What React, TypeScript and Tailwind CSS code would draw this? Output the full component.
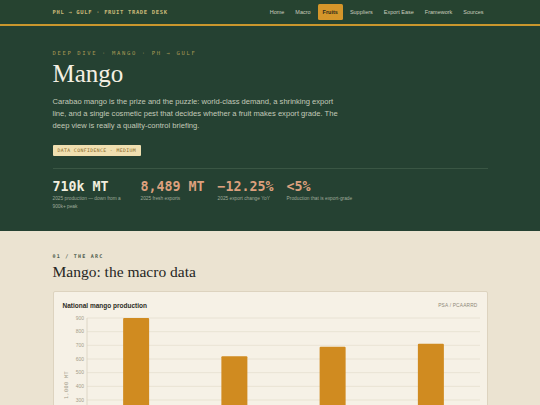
const sans = { fontFamily: '"Liberation Sans", Arial, sans-serif' };
const mono = { fontFamily: '"DejaVu Sans Mono", "Liberation Mono", monospace' };
const serif = { fontFamily: '"Liberation Serif", "DejaVu Serif", serif' };

const navItems = ['Home', 'Macro', 'Fruits', 'Suppliers', 'Export Ease', 'Framework', 'Sources'];

const stats = [
  { value: '710k MT', caption: '2025 production — down from a 900k+ peak', light: true },
  { value: '8,489 MT', caption: '2025 fresh exports' },
  { value: '−12.25%', caption: '2025 export change YoY' },
  { value: '<5%', caption: 'Production that is export-grade' },
];

const bars = [900, 620, 690, 712];

const Chart = () => {
  const top = 5;
  const unit = 0.1367;
  const y = (v: number) => top + (900 - v) * unit;
  const ticks = [900, 800, 700, 600, 500, 400, 300, 200, 100, 0];
  const slot = 98.25;
  return (
    <svg width="418" height="140" className="block">
      {ticks.map((t) => (
        <g key={t}>
          <line x1="24" x2="417" y1={y(t)} y2={y(t)} stroke="#E6DFCF" strokeWidth="0.8" />
          <text
            x="21"
            y={y(t) + 1.8}
            textAnchor="end"
            fontSize="5"
            fill="#A49D8B"
            style={sans}
          >
            {t}
          </text>
        </g>
      ))}
      <line x1="24" x2="24" y1={y(900)} y2={y(0)} stroke="#D8D0BE" strokeWidth="0.8" />
      <text
        x="5"
        y="72"
        fontSize="5"
        fill="#A49D8B"
        textAnchor="middle"
        transform="rotate(-90 5 72)"
        style={mono}
        letterSpacing="0.5"
      >
        1,000 MT
      </text>
      {bars.map((v, i) => {
        const cx = 24 + slot * i + slot / 2;
        return (
          <rect
            key={i}
            x={cx - 13}
            y={y(v)}
            width="26"
            height={y(0) - y(v)}
            rx="1"
            fill="#D08B20"
          />
        );
      })}
    </svg>
  );
};

export default function App() {
  return (
    <div className="h-[405px] overflow-hidden bg-[#EBE3D1]" style={sans}>
      <header className="bg-[#264330] border-b-2 border-[#C9962D]">
        <div className="max-w-[435px] mx-auto h-6 flex items-center justify-between">
          <span className="text-[5.5px] tracking-[0.12em] text-[#C8B878] font-bold" style={mono}>
            PHL → GULF · FRUIT TRADE DESK
          </span>
          <nav className="flex items-center gap-[3px] text-[5.5px] text-[#C9CDBF]">
            {navItems.map((n) => (
              <span
                key={n}
                className={
                  n === 'Fruits'
                    ? 'px-[5px] py-[4px] rounded-[1.5px] bg-[#D4962A] text-[#2B2A1A] font-bold'
                    : 'px-[4px] py-[4px]'
                }
              >
                {n}
              </span>
            ))}
          </nav>
        </div>
      </header>

      <section className="bg-[#254132] pt-[23px] pb-[20px]">
        <div className="max-w-[435px] mx-auto">
          <p className="text-[5.5px] leading-[8px] tracking-[0.3em] text-[#A89A55]" style={mono}>
            DEEP DIVE · MANGO · PH → GULF
          </p>
          <h1 className="mt-[3px] text-[25px] leading-[28px] text-[#F4EFE2]" style={serif}>
            Mango
          </h1>
          <p className="mt-2 max-w-[292px] text-[7.6px] leading-[12px] text-[#C3CAB9]">
            Carabao mango is the prize and the puzzle: world-class demand, a shrinking export line,
            and a single cosmetic pest that decides whether a fruit makes export grade. The deep
            view is really a quality-control briefing.
          </p>
          <span
            className="mt-[13px] inline-block px-[5px] h-[11px] leading-[11px] rounded-[1px] bg-[#F0DFB0] text-[#8A6A2A] text-[4.8px] tracking-[0.08em]"
            style={mono}
          >
            DATA CONFIDENCE · MEDIUM
          </span>
          <div className="mt-[9px] border-t border-[#3A5644]" />
          <div className="mt-[10px] flex gap-[13px]">
            {stats.map((s) => (
              <div key={s.value} className="flex flex-col">
                <span
                  className={`text-[13.3px] leading-[16px] font-bold ${s.light ? 'text-[#F2EEDF]' : 'text-[#DDA07E]'}`}
                  style={mono}
                >
                  {s.value}
                </span>
                <span className="max-w-[75px] text-[4.8px] leading-[8px] text-[#9FAA9A]">
                  {s.caption}
                </span>
              </div>
            ))}
          </div>
        </div>
      </section>

      <section className="pt-[21px]">
        <div className="max-w-[435px] mx-auto">
          <p className="text-[5px] leading-[8px] tracking-[0.25em] text-[#4F5D4E] font-bold" style={mono}>
            01 / THE ARC
          </p>
          <h2 className="mt-[2px] text-[15.5px] leading-[20px] text-[#26261F]" style={serif}>
            Mango: the macro data
          </h2>
          <div className="mt-[9px] bg-[#F6F1E6] border border-[#DDD3BF] rounded-[2px] px-[9px] pt-[9px] pb-3">
            <div className="flex items-center justify-between">
              <span className="text-[6.5px] font-bold text-[#2C2C24]">National mango production</span>
              <span className="text-[4.8px] text-[#8E8878] tracking-[0.04em]">PSA / PCAARRD</span>
            </div>
            <div className="mt-[2px]">
              <Chart />
            </div>
          </div>
        </div>
      </section>
    </div>
  );
}
